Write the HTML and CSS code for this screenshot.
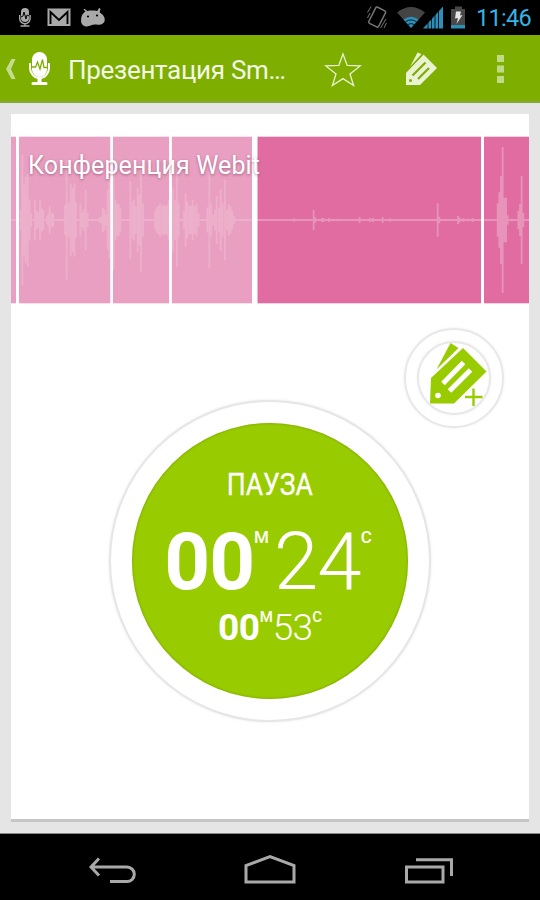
FILE: index.html
```html
<!DOCTYPE html>
<html lang="ru">
<head>
<meta charset="utf-8">
<title>Диктофон</title>
<link rel="stylesheet" href="styles.css">
</head>
<body>
<div class="screen">
  <header class="status">
    <svg class="status-left" width="120" height="35" viewBox="0 0 120 35">
      <g fill="#a9a9a9">
        <rect x="21" y="8" width="8" height="14" rx="4"/>
        <path d="M19.700 15v3.500a5.200 5.200 0 0 0 10.400 0V15M25 23v3M20.500 26h9" fill="none" stroke="#a9a9a9" stroke-width="1.400"/>
        <path d="M21 17l2-1 1-4 2 7 1-4 2 1" fill="none" stroke="#000" stroke-width="1"/>
        <rect x="47.500" y="8.500" width="23" height="17.500"/>
        <path d="M50.500 24V12L59 20l8.500-8V24" fill="none" stroke="#000" stroke-width="1.900"/>
        <path d="M81 21c0-5 1.500-8 4.500-9.500L83.500 9.500l1-.8 2.800 2.300c3-.6 7-.5 10 0l1.700-3 1.500.8-.8 3.700c3.500 2 5.500 5 5 8-.5 3.200-4 4.500-7 4.200-3-.3-4-.4-7 .9-3 1.500-9.200 1.600-9.700-4.600z"/>
        <circle cx="88" cy="16.500" r="1.100" fill="#000"/><circle cx="97" cy="15.500" r="1.100" fill="#000"/>
      </g>
    </svg>
    <svg class="status-right" width="100" height="35" viewBox="365 0 100 35">
      <g fill="none" stroke="#777" stroke-width="1.500">
        <rect x="371.700" y="8" width="11" height="18" rx="1.500" transform="rotate(27 377 17)"/>
        <path d="M367.500 12.500l3.500-6M367.500 18l2.500-5M380.500 28l5.500-9M384 28l2.500-5" stroke-width="1"/>
      </g>
      <path d="M397 12.500Q411 1.500 425 12.500L411 28z" fill="#444"/>
      <path d="M403.500 19.500Q411 14 418.500 19.500L411 28z" fill="#2d8eb8"/>
      <path d="M405.500 21.800Q411 18 416.500 21.800M408 24.500q3-2 6 0" fill="none" stroke="#123" stroke-width="1"/>
      <path d="M423 28.500L443 6.500v22z" fill="#2d8eb8"/>
      <path d="M428 22v7M431.500 18v11M435 14v15M438.500 10v19" stroke="#000" stroke-width=".8"/>
      <path d="M451 9h4V6.500h7V9h4v19h-15z" fill="#484848"/>
      <rect x="451" y="25" width="15" height="3.500" fill="#2d8eb8"/>
      <path d="M456 11.500h5l-1 4 2.500-.5-6 9 1.500-6-3 .5z" fill="#e6e6e6"/>
    </svg>
    <span class="time">11:46</span>
  </header>

  <div class="actionbar">
    <svg class="brand" width="60" height="66" viewBox="0 35 60 66">
      <path d="M11.500 59h4l-4.500 10 4.500 10h-4L6 69z" fill="#c5dc90"/>
      <rect x="32" y="52" width="15" height="25" rx="7.500" fill="#fff"/>
      <path d="M30 63v5a9.500 10 0 0 0 19 0v-5" fill="none" stroke="#fff" stroke-width="2"/>
      <path d="M39.500 77v6" stroke="#fff" stroke-width="4"/>
      <path d="M33 83.500h13" stroke="#fff" stroke-width="3" stroke-linecap="round"/>
      <path d="M32 67h3.500l2-5 2.500 7 2.500-9.500 1.500 8h3" fill="none" stroke="#7eae00" stroke-width="1.300"/>
    </svg>
    <h1 class="title">Презентация Sm…</h1>
    <svg class="actions" width="220" height="66" viewBox="320 35 220 66">
      <path d="M343 54l4.200 11.400 13 .5-10.200 8 3.600 11.600L343 78.600 332.400 85.500l3.600-11.600-10.200-8 13-.5z" fill="none" stroke="#e9f2d2" stroke-width="1.300"/>
      <g fill="#e9f2d2">
        <path d="M423.500 54.500L437 68 420 85h-14V73z"/>
        <path d="M410 67l7.500-14.500 4 1.500z"/>
      </g>
      <path d="M412.500 75.500l13-13M418 79l11-11" stroke="#7eae00" stroke-width="2.200"/>
      <path d="M409.500 68.500L422.500 55" stroke="#7eae00" stroke-width="1"/>
      <circle cx="410.500" cy="80.500" r="1.500" fill="#7eae00"/>
      <path d="M497 55h7v7h-7zM497 65.500h7v7h-7zM497 76h7v7h-7z" fill="#c1da86"/>
    </svg>
  </div>

  <main class="content">
    <section class="card">
      <div class="wave">
        <svg width="518" height="168" viewBox="11 136 518 168">
          <path d="M11 136.500h5v167h-5zM19 136.500h91.500v167H19zM113 136.500h56v167h-56zM171.700 136.500H252v167h-80.300z" fill="#e99fc1"/>
          <path d="M257.300 136.500H481v167H257.300zM484 136.500h45v167h-45z" fill="#e06ca1"/>
          <path d="M11 136.500h518M11 303.500h518" stroke="#fff" stroke-opacity=".4"/>
          <path id="bars" fill="#f3c4d8" fill-opacity=".46"/>
          <path d="M16 136h3v168h-3zM110.500 136h2.500v168h-2.500zM169 136h2.700v168H169zM252 136h5.300v168H252zM481 136h3v168h-3z" fill="#fff"/>
        </svg>
        <span class="label">Конференция Webit</span>
      </div>
      <div class="tagrow">
        <div class="tagbtn">
          <div class="tagbtn-inner">
            <svg width="70" height="70" viewBox="419 343 70 70">
              <g fill="#99cc00">
                <path d="M463 348l23.500 23.500L454 403.500h-24l1-25.500z"/>
                <path d="M436.500 369.500L450.500 343l8 5z"/>
              </g>
              <path d="M443 383.500l20.500-21M449.500 391l21-21" stroke="#fff" stroke-width="5"/>
              <circle cx="438" cy="395.500" r="2.800" fill="#fff"/>
              <path d="M473.500 388.500v17.500M465 397h17.500" stroke="#99cc00" stroke-width="2.400"/>
            </svg>
          </div>
        </div>
      </div>
      <button class="dial">
        <span class="face">
          <span class="state">ПАУЗА</span>
          <span class="clock big"><b>00</b><sup class="m">М</sup><i>24</i><sup>С</sup></span>
          <span class="clock small"><b>00</b><sup class="m">М</sup><i>53</i><sup>С</sup></span>
        </span>
      </button>
    </section>
  </main>

  <nav class="navbar">
    <svg width="540" height="67" viewBox="0 833 540 67">
      <g fill="none" stroke="#a9a9a9" stroke-width="3">
        <path d="M91 867h36a7.300 7.300 0 0 1 0 14.600h-17M99 858.500L91 867l8 8.500"/>
        <path d="M246 882v-16.500l24-8.800 24 8.800V882z"/>
        <path d="M406.500 867h36.500v15h-36.500zM416 859.700h35.500V876"/>
      </g>
    </svg>
  </nav>
</div>
<script src="wave.js"></script>
</body>
</html>
```
FILE: styles.css
```css
* { box-sizing: border-box; }
body { margin: 0; font-family: Roboto, "Liberation Sans", sans-serif; }
.screen { width: 540px; height: 900px; display: flex; flex-direction: column; overflow: hidden; background: #e5e5e5; }
.status { height: 35px; background: #000; display: flex; align-items: center; flex: none; }
.status svg { flex: none; }
.status-right { margin-left: 245px; }
.time { margin-left: 11px; color: #33b5e5; font-size: 23.5px; letter-spacing: -.7px; line-height: 35px; padding-top: 1px; white-space: nowrap; }
.actionbar { height: 68px; flex: none; display: flex; align-items: flex-start; background: #7eae00; border-bottom: 2px solid #85a63d; }
.actionbar svg { flex: none; }
.title { margin: 0; padding-left: 8px; width: 260px; flex: none; font-size: 26px; letter-spacing: -.3px; font-weight: 400; line-height: 70px; color: #f3f8e6; white-space: nowrap; }
.content { flex: 1; padding: 11px 11px 0; }
.card { height: 708px; background: #fff; padding-top: 22px; border-bottom: 3px solid #c6c6c6; }
.wave { position: relative; height: 168px; }
.wave svg { display: block; }
.label { position: absolute; left: 17px; top: 15px; font-size: 25px; letter-spacing: .12px; line-height: 30px; color: #fff; white-space: nowrap; text-shadow: 0 1px 3px rgba(60, 0, 30, .4); }
.tagrow { display: flex; justify-content: flex-end; padding: 24px 25px 0 0; }
.tagbtn { width: 100px; height: 100px; border-radius: 50%; border: 2px solid #e8e8e8; box-shadow: 0 0 3px #eee; display: grid; place-items: center; }
.tagbtn-inner { width: 74px; height: 74px; border-radius: 50%; border: 2px solid #e8e8e8; box-shadow: 0 0 3px #eee; display: grid; place-items: center; }
.tagbtn-inner svg { overflow: visible; }
.dial { display: grid; place-items: center; width: 322px; height: 322px; margin: -28px auto 0; padding: 0; border-radius: 50%; border: 2px solid #e6e6e6; background: #fff; box-shadow: 0 0 3px #e8e8e8; font: inherit; }
.face { width: 276px; height: 276px; border-radius: 50%; background: #99cc00; box-shadow: inset 0 0 3px #6f9900; color: #fff; display: flex; flex-direction: column; align-items: center; }
.state { margin-top: 42px; font-size: 32px; line-height: 38px; height: 38px; transform: scaleX(.83); -webkit-text-stroke: .3px #fff; }
.clock { display: flex; align-items: flex-start; white-space: nowrap; }
.clock b { font-weight: 700; }
.clock i { font-style: normal; font-weight: 300; }
.clock sup { font-weight: 500; }
.big { height: 94px; margin-top: 12px; margin-left: -4px; font-size: 80px; line-height: 94px; }
.big b { letter-spacing: -1px; }
.big i { margin-left: 5px; letter-spacing: -1px; }
.big sup { font-size: 17px; line-height: 20px; margin-top: 12px; }
.small { height: 44px; margin-top: -3px; font-size: 37px; line-height: 44px; }
.small b { letter-spacing: -.3px; }
.small i { letter-spacing: -.8px; }
.small sup { font-size: 15px; line-height: 18px; margin-top: 2px; }
.navbar { height: 67px; flex: none; background: #000; border-top: 1px solid #888; }
.navbar svg { display: block; margin-top: -1px; }
```
FILE: wave.js
```js
// Bars as [x, half height], in thirds of a pixel.
var bars = [
  [62,30],[67,195],[72,105],[77,130],[83,140],[89,62],[94,20],
  [105,60],[110,28],[115,25],[120,60],[125,35],[130,30],[141,12],[145,20],[149,42],[155,22],[160,20],
  [195,45],[200,180],[206,50],[212,108],[218,95],[223,110],[228,55],[241,50],[246,22],[251,30],[257,90],[263,22],
  [298,8],[303,10],[308,36],[313,30],[318,18],[323,90],[328,115],[341,150],[346,60],[351,50],[356,48],[361,35],
  [391,117],[397,55],[402,62],[407,42],[413,95],[418,75],[423,155],[429,50],
  [465,28],[470,38],[475,42],[480,50],[486,42],[491,46],[496,42],[501,45],[506,60],[519,95],[525,60],[531,142],[536,50],
  [552,30],[557,80],[562,55],[568,45],[573,42],[578,60],[584,42],[590,50],[596,20],
  [622,38],[628,145],[634,50],[639,15],[645,30],[650,72],[657,35],[662,92],[668,50],[675,120],[681,30],[686,48],[692,40],[697,28],[703,12],
  [882,5],[941,30],[946,8],[966,7],[971,5],[987,6],[1000,4],[1014,4],[1079,9],[1110,6],[1119,6],[1148,9],[1170,5],[1313,50],[1318,10],[1374,12],[1379,7],[1390,5],[1404,4],[1418,6],
  [1493,50],[1498,85],[1503,132],[1508,219],[1513,67],[1518,67],[1523,14],[1535,4],[1555,28],[1560,48],[1565,132],[1570,22]
];
var d = "M11 219h518v2h-518z";
bars.forEach(function (b) {
  var x = b[0] / 3 - 0.9, h = b[1] / 3;
  d += "M" + x + " " + (220 - h) + "h1.800v" + 2 * h + "h-1.800z";
});
document.getElementById("bars").setAttribute("d", d);
```
